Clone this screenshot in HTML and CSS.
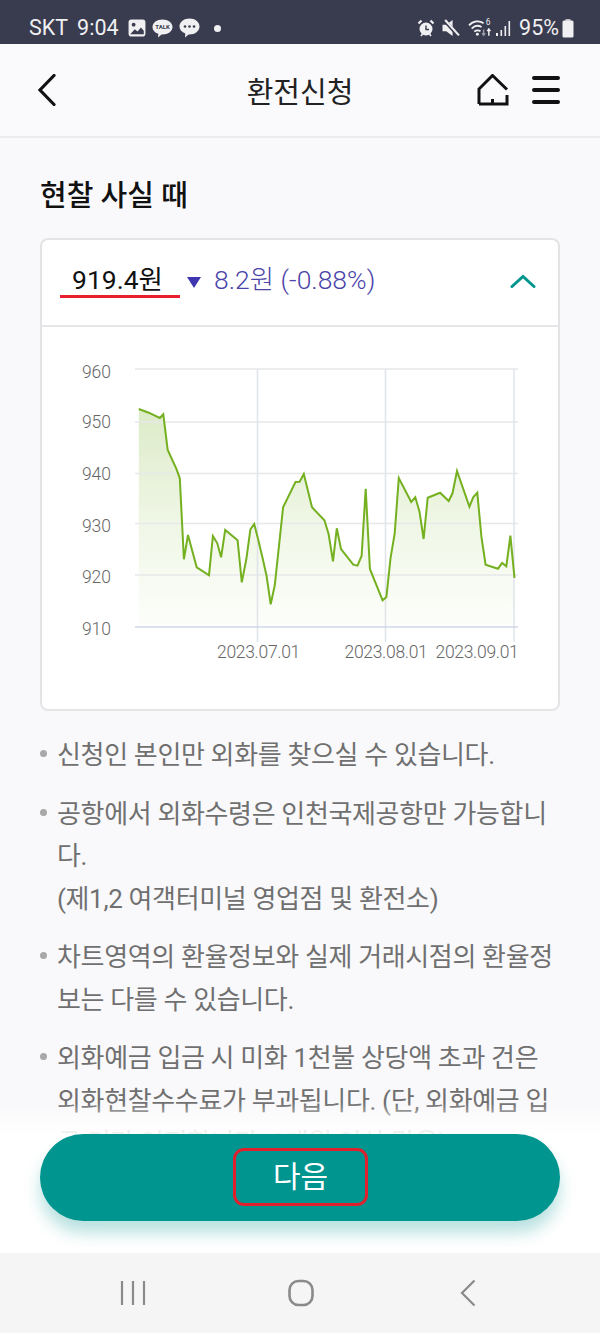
FILE: index.html
```html
<!DOCTYPE html>
<html lang="ko">
<head>
    <meta charset="UTF-8">
    <meta name="viewport" content="width=device-width, initial-scale=1.0">
    <title>환전신청</title>
    <link rel="stylesheet" href="styles.css">
</head>
<body>
<div class="page">
    <div class="statusbar">
        <div class="status-left">
            <span class="status-text">SKT</span>
            <span class="status-text status-time">9:04</span>
            <svg class="st-icon" width="18" height="18" viewBox="0 0 16 16"><rect x="0.5" y="0.5" width="15" height="15" rx="2.5" fill="#f0f0f2"/><circle cx="5" cy="5" r="1.7" fill="#393b4f"/><path d="M2 13.5 L6 9 L8.5 11 L11.5 7.5 L14 10.5 V13.5 Z" fill="#393b4f"/></svg>
            <svg class="st-icon" width="21" height="19" viewBox="0 0 21 19"><path d="M10.5 0.5 C16 0.5 20.5 3.6 20.5 8 C20.5 12.4 16 15.5 10.5 15.5 L9.5 15.5 L6 18.5 L6.3 14.8 C2.8 13.6 0.5 11 0.5 8 C0.5 3.6 5 0.5 10.5 0.5 Z" fill="#f0f0f2"/><text x="10.5" y="10.4" class="talk">TALK</text></svg>
            <svg class="st-icon" width="21" height="20" viewBox="0 0 21 20"><path d="M10.5 0.5 C16 0.5 20.5 4 20.5 8.5 C20.5 13 16 16.5 10.5 16.5 L9.5 16.5 L6 19.5 L6.3 15.6 C2.8 14.2 0.5 11.5 0.5 8.5 C0.5 4 5 0.5 10.5 0.5 Z" fill="#f0f0f2"/><circle cx="6" cy="8.5" r="1.3" fill="#393b4f"/><circle cx="10.5" cy="8.5" r="1.3" fill="#393b4f"/><circle cx="15" cy="8.5" r="1.3" fill="#393b4f"/></svg>
            <span class="st-dot"></span>
        </div>
        <div class="status-right">
            <svg width="18" height="18" viewBox="0 0 18 18"><circle cx="9" cy="10" r="6.5" fill="#f0f0f2"/><path d="M9 6.5 V10.5 H12" fill="none" stroke="#393b4f" stroke-width="1.4"/><path d="M1.5 4.5 L4.5 1.5 M16.5 4.5 L13.5 1.5" stroke="#f0f0f2" stroke-width="2.2"/><path d="M4 17 L5.5 15 M14 17 L12.5 15" stroke="#f0f0f2" stroke-width="1.6"/></svg>
            <svg class="st-mute" width="18" height="18" viewBox="0 0 17 17"><path d="M0.5 5.500 H4 L10 1 V16 L4 11.500 H0.5 Z" fill="#f0f0f2"/><path d="M2.5 1.5 L15.5 16" stroke="#393b4f" stroke-width="3.4"/><path d="M3 1 L16 15.5" stroke="#f0f0f2" stroke-width="2"/></svg>
            <svg class="st-wifi" width="25" height="20" viewBox="0 0 24 19"><path d="M1 7 C5 2.5 11 2 15 5 M3.5 10 C6.5 7 10 6.8 13 8.5 M6 13 C8 11.5 10 11.5 12 12.5" fill="none" stroke="#f0f0f2" stroke-width="1.700"/><circle cx="9" cy="15.5" r="1.4" fill="#f0f0f2"/><text x="17" y="7" class="wifi-six">6</text><path d="M15 11 V16 M13.5 14.5 L15 16.5 L16.5 14.5" fill="none" stroke="#9a9ba6" stroke-width="1.3"/><path d="M20 17 V11 M18.5 12.5 L20 10.5 L21.500 12.500" fill="none" stroke="#f0f0f2" stroke-width="1.4"/></svg>
            <svg class="st-signal" width="15" height="16" viewBox="0 0 15 16"><rect x="0" y="13" width="2" height="3" fill="#f0f0f2"/><rect x="4.500" y="10" width="1.600" height="6" fill="#f0f0f2"/><rect x="8.500" y="6" width="1.600" height="10" fill="#f0f0f2"/><rect x="12.500" y="1" width="1.600" height="15" fill="#f0f0f2"/></svg>
            <span class="status-text">95%</span>
            <svg class="st-batt" width="12" height="19" viewBox="0 0 12 19"><rect x="3.500" y="0" width="5" height="2" fill="#b9bac2"/><rect x="0.500" y="1.500" width="11" height="17" rx="1.500" fill="#f0f0f2"/></svg>
        </div>
    </div>

    <header class="appbar">
        <svg class="back" width="18" height="32" viewBox="0 0 18 32"><path d="M16 1.500 L2 16 L16 30.500" fill="none" stroke="#111" stroke-width="3.200" stroke-linecap="round"/></svg>
        <h1>환전신청</h1>
        <div class="appbar-icons">
            <svg width="32" height="32" viewBox="0 0 32 32"><path d="M2 30 V15 L15.500 1.500 L30 15.500 M30 21 V30 H2 M15.500 30 V25" fill="none" stroke="#111" stroke-width="3"/></svg>
            <div class="burger"><span></span><span></span><span></span></div>
        </div>
    </header>

    <main class="content">
        <h2>현찰 사실 때</h2>
        <section class="card">
            <div class="card-head">
                <span class="price">919.4원</span>
                <span class="down"></span>
                <span class="change">8.2원 (-0.88%)</span>
                <svg class="chev" width="26" height="14" viewBox="0 0 26 14"><path d="M2 12.500 L13 2.500 L24 12.500" fill="none" stroke="#00958f" stroke-width="3" stroke-linecap="round"/></svg>
            </div>
            <svg class="chart" width="516" height="382" viewBox="42 327 516 382">
                <defs>
                    <linearGradient id="fade" x1="0" y1="409" x2="0" y2="627" gradientUnits="userSpaceOnUse">
                        <stop offset="0" stop-color="#dcebc8"/>
                        <stop offset="0.5" stop-color="#eff6e5"/>
                        <stop offset="1" stop-color="#fdfefb"/>
                    </linearGradient>
                </defs>
                <polygon fill="url(#fade)" points="138.800,627 138.800,409 148.800,412.700 159.800,418 163.300,414.300 167.700,450 176.300,468.700 179.800,478.300 183.900,559.300 188,535 196.700,567.300 209,575.300 212.900,536 217.300,543.300 221.100,557.300 225.200,530 237.600,540.300 241.800,582.300 246.300,559.300 250.400,529.300 254.200,524 258.300,540 262.400,557.300 266.600,576 270.700,604.300 274.800,585 283.100,507.300 295.500,482 299.600,481.700 303.800,474 312,507.300 324.400,520.300 328.600,534 333,561.300 336.800,528.300 341,549 353.300,564.700 357.500,565.700 361.600,556 365.700,488.700 369.900,569 382.600,600.300 386.400,597 390.500,558.300 394.700,533.300 398.800,478 411.200,502 415.300,497.300 419.500,511.700 423.600,539 427.700,497.700 440.100,492.700 448.700,501 452.500,493.300 457,471 469.400,506.700 473.200,497.300 477.300,492.700 481.400,536.700 485.600,564.700 498,568.700 502.100,563 506.300,566.300 510.400,535.700 514.500,578 514.500,627"/>
                <g class="grid">
                    <path d="M135 369 H518 M135 422 H518 M135 473.500 H518 M135 523.500 H518 M135 575 H518"/>
                </g>
                <g class="axis">
                    <path d="M257.500 369 V642 M385.500 369 V642 M514 369 V642"/>
                </g>
                <path class="base" d="M135 627 H518"/>
                <polyline class="line" points="138.800,409 148.800,412.700 159.800,418 163.300,414.300 167.700,450 176.300,468.700 179.800,478.300 183.900,559.300 188,535 196.700,567.300 209,575.300 212.900,536 217.300,543.300 221.100,557.300 225.200,530 237.600,540.300 241.800,582.300 246.300,559.300 250.400,529.300 254.200,524 258.300,540 262.400,557.300 266.600,576 270.700,604.300 274.800,585 283.100,507.300 295.500,482 299.600,481.700 303.800,474 312,507.300 324.400,520.300 328.600,534 333,561.300 336.800,528.300 341,549 353.300,564.700 357.500,565.700 361.600,556 365.700,488.700 369.900,569 382.600,600.300 386.400,597 390.500,558.300 394.700,533.300 398.800,478 411.200,502 415.300,497.300 419.500,511.700 423.600,539 427.700,497.700 440.100,492.700 448.700,501 452.500,493.300 457,471 469.400,506.700 473.200,497.300 477.300,492.700 481.400,536.700 485.600,564.700 498,568.700 502.100,563 506.300,566.300 510.400,535.700 514.500,578"/>
                <g class="ylabels">
                    <text x="111" y="378">960</text>
                    <text x="111" y="428">950</text>
                    <text x="111" y="480">940</text>
                    <text x="111" y="532">930</text>
                    <text x="111" y="583">920</text>
                    <text x="111" y="635">910</text>
                </g>
                <g class="xlabels">
                    <text x="258.500" y="658">2023.07.01</text>
                    <text x="386" y="658">2023.08.01</text>
                    <text x="477" y="658">2023.09.01</text>
                </g>
            </svg>
        </section>
        <ul class="notes">
            <li>신청인 본인만 외화를 찾으실 수 있습니다.</li>
            <li>공항에서 외화수령은 인천국제공항만 가능합니<br>다.<br>(제1,2 여객터미널 영업점 및 환전소)</li>
            <li>차트영역의 환율정보와 실제 거래시점의 환율정<br>보는 다를 수 있습니다.</li>
            <li>외화예금 입금 시 미화 1천불 상당액 초과 건은<br>외화현찰수수료가 부과됩니다. (단, 외화예금 입<br>금 기간 인정합니다. 3개월 이상 많음)</li>
        </ul>
        <div class="footer">
            <button type="button" class="next"><span class="next-label">다음</span></button>
        </div>
    </main>

    <nav class="navbar">
        <svg width="26" height="26" viewBox="0 0 26 26"><path d="M2 1 V25 M13 1 V25 M24 1 V25" stroke="#8a8a8a" stroke-width="2.200"/></svg>
        <svg class="nav-home" width="26" height="28" viewBox="0 0 26 28"><rect x="1.500" y="2" width="23" height="24" rx="9" fill="none" stroke="#8a8a8a" stroke-width="2.600"/></svg>
        <svg class="nav-back" width="16" height="28" viewBox="0 0 16 28"><path d="M14.500 1.500 L2 14 L14.500 26.500" fill="none" stroke="#8a8a8a" stroke-width="2.200"/></svg>
    </nav>
</div>
</body>
</html>
```

FILE: styles.css
```css
* {
    box-sizing: border-box;
}
body {
    margin: 0;
    font-family: Roboto, "Noto Sans CJK KR", sans-serif;
    background-color: #f9f9fb;
}
.page {
    width: 600px;
    height: 1333px;
    display: flex;
    flex-direction: column;
    overflow: hidden;
}

/* status bar */
.statusbar {
    height: 44px;
    flex: none;
    padding: 12px 26px 0 29px;
    display: flex;
    justify-content: space-between;
    align-items: center;
    background-color: #393b4f;
    color: #f0f0f2;
}
.status-left,
.status-right {
    display: flex;
    align-items: center;
}
.status-text {
    font-size: 21.500px;
    line-height: 28px;
}
.status-time {
    margin-left: 9px;
}
.st-icon {
    margin-left: 9px;
}
.st-icon + .st-icon {
    margin-left: 6px;
}
.st-dot {
    width: 7px;
    height: 7px;
    margin-left: 14px;
    border-radius: 50%;
    background-color: #f0f0f2;
}
.talk {
    font-size: 6px;
    font-weight: 700;
    text-anchor: middle;
    fill: #393b4f;
}
.wifi-six {
    font-size: 8px;
    fill: #f0f0f2;
}
.st-mute {
    margin-left: 7px;
}
.st-wifi {
    margin-left: 8px;
}
.st-signal {
    margin: 0 8px 0 3px;
}
.st-batt {
    margin-left: 3px;
}

/* top bar */
.appbar {
    height: 94px;
    flex: none;
    position: relative;
    padding: 0 40px 0 38px;
    display: flex;
    align-items: center;
    justify-content: space-between;
    background-color: #fafafc;
    border-bottom: 2px solid #ececee;
}
.appbar h1 {
    position: absolute;
    left: 0;
    right: 0;
    margin: 0;
    text-align: center;
    font-size: 29px;
    font-weight: 400;
    color: #222;
}
.appbar-icons {
    display: flex;
    align-items: center;
    gap: 23px;
}
.burger {
    width: 28px;
    display: flex;
    flex-direction: column;
    gap: 8.500px;
}
.burger span {
    height: 3.500px;
    border-radius: 2px;
    background-color: #111;
}

/* content */
.content {
    flex: 1;
    position: relative;
    overflow: hidden;
    padding: 36px 40px 0;
}
.content h2 {
    margin: 0 0 20px;
    font-size: 29px;
    line-height: 44px;
    font-weight: 500;
    color: #111;
}
.card {
    width: 520px;
    height: 473px;
    background: #fff;
    border: 2px solid #e2e4e6;
    border-radius: 8px;
}
.card-head {
    height: 87px;
    padding: 29px 22px 0 18px;
    display: flex;
    align-items: flex-start;
    border-bottom: 2px solid #e6e6e8;
}
.price {
    width: 120px;
    height: 29px;
    padding-left: 12px;
    border-bottom: 3px solid #e8202e;
    font-size: 26.500px;
    line-height: 22px;
    color: #111;
}
.down {
    width: 0;
    height: 0;
    margin: 8px 0 0 7px;
    border-left: 7px solid transparent;
    border-right: 7px solid transparent;
    border-top: 11px solid #3f37b0;
}
.change {
    margin-left: 13px;
    font-size: 26.500px;
    line-height: 22px;
    font-weight: 300;
    color: #4a43a8;
}
.chev {
    margin: 5px 0 0 auto;
}
.chart {
    display: block;
}
.grid path {
    fill: none;
    stroke: #e7e8ea;
    stroke-width: 1.500;
}
.axis path {
    fill: none;
    stroke: #e0e3ea;
    stroke-width: 1.500;
}
.base {
    fill: none;
    stroke: #cfd8e8;
    stroke-width: 1.500;
}
.line {
    fill: none;
    stroke: #74b020;
    stroke-width: 2;
}
.ylabels text {
    font-size: 17.500px;
    font-weight: 300;
    text-anchor: end;
    fill: #666;
}
.xlabels text {
    font-size: 17.500px;
    font-weight: 300;
    text-anchor: middle;
    letter-spacing: -0.3px;
    fill: #666;
}
.notes {
    margin: 23px 0 0;
    padding: 0;
    list-style: none;
    font-size: 26px;
    line-height: 42.500px;
    letter-spacing: -0.35px;
    color: #707070;
}
.notes li {
    position: relative;
    padding-left: 17px;
    margin-bottom: 16px;
}
.notes li::before {
    content: "";
    position: absolute;
    left: 0;
    top: 16px;
    width: 7px;
    height: 7px;
    border-radius: 50%;
    background-color: #a8a8a8;
}

/* bottom button */
.footer {
    position: absolute;
    left: 0;
    right: 0;
    bottom: 0;
    height: 150px;
    padding: 0 40px;
    display: flex;
    align-items: flex-end;
    background: linear-gradient(to bottom, rgba(255, 255, 255, 0) 0, rgba(255, 255, 255, 0.88) 28px, #fff 36px);
}
.next {
    width: 520px;
    height: 87px;
    margin-bottom: 32px;
    border: none;
    border-radius: 44px;
    background-color: #00958f;
    box-shadow: 0 12px 16px rgba(0, 149, 143, 0.28);
    display: flex;
    align-items: center;
    justify-content: center;
    font-family: inherit;
    color: #fff;
}
.next-label {
    width: 135px;
    height: 58px;
    margin: 0 0 2px 1px;
    border: 3px solid #e0202c;
    border-radius: 11px;
    font-size: 30px;
    line-height: 52px;
    text-align: center;
}

/* android nav */
.navbar {
    height: 80px;
    flex: none;
    padding-left: 120px;
    display: flex;
    align-items: center;
    background-color: #f5f5f5;
}
.nav-home {
    margin-left: 142px;
}
.nav-back {
    margin-left: 146px;
}
```
